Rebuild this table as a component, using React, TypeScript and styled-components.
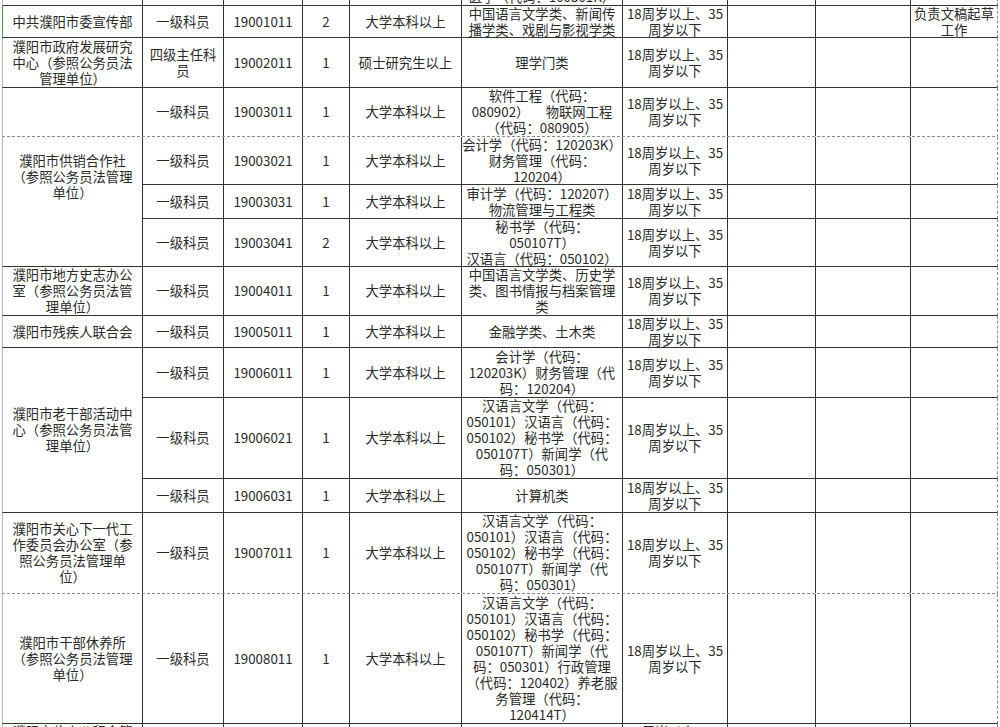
import React, { useLayoutEffect, useRef } from 'react';
import styled, { createGlobalStyle } from 'styled-components';

// column widths and row heights follow the sheet grid (borders included)
const COLUMNS = [141, 81, 79, 47, 112, 161, 105, 88, 95, 87];
const SCROLL_TOP = 11;

const AGE = '18周岁以上、35\n周岁以下';
const HAN = '汉语言文学（代码：\n050101）汉语言（代码：\n050102）秘书学（代码：\n050107T）新闻学（代\n码：050301）';

interface CellData {
  t: string;
  span?: number;
  selected?: boolean;
}

type Slot = CellData | string | null;

interface RowData {
  height: number;
  cells: Slot[];
  breakAfter?: boolean;
}

const job = (code: string, num: string, major: string, edu = '大学本科以上', pos = '一级科员'): Slot[] =>
  [pos, code, num, edu, major, AGE, '', '', ''];

const ROWS: RowData[] = [
  { height: 17, cells: ['', '', '', '', '', '医学（代码：100301K）', '', '', '', ''] },
  {
    height: 32,
    cells: [
      { t: '中共濮阳市委宣传部', selected: true },
      '一级科员', '19001011', '2', '大学本科以上',
      '中国语言文学类、新闻传\n播学类、戏剧与影视学类', AGE, '', '', '负责文稿起草\n工作'
    ]
  },
  {
    height: 50,
    cells: ['濮阳市政府发展研究\n中心（参照公务员法\n管理单位）', ...job('19002011', '1', '理学门类', '硕士研究生以上', '四级主任科\n员')]
  },
  {
    height: 49,
    breakAfter: true,
    cells: [
      { t: '濮阳市供销合作社\n（参照公务员法管理\n单位）', span: 4 },
      ...job('19003011', '1', '软件工程（代码：\n080902）\u3000 物联网工程\n（代码：080905）')
    ]
  },
  { height: 48, cells: [null, ...job('19003021', '1', '会计学（代码：120203K）\n财务管理（代码：\n120204）')] },
  { height: 34, cells: [null, ...job('19003031', '1', '审计学（代码：120207）\n物流管理与工程类')] },
  { height: 48, cells: [null, ...job('19003041', '2', '秘书学（代码：\n050107T）\n汉语言（代码：050102）')] },
  {
    height: 49,
    cells: ['濮阳市地方史志办公\n室（参照公务员法管\n理单位）', ...job('19004011', '1', '中国语言文学类、历史学\n类、图书情报与档案管理\n类')]
  },
  { height: 32, cells: ['濮阳市残疾人联合会', ...job('19005011', '1', '金融学类、土木类')] },
  {
    height: 50,
    cells: [
      { t: '濮阳市老干部活动中\n心（参照公务员法管\n理单位）', span: 3 },
      ...job('19006011', '1', '会计学（代码：\n120203K）财务管理（代\n码：120204）')
    ]
  },
  { height: 81, cells: [null, ...job('19006021', '1', HAN)] },
  { height: 34, cells: [null, ...job('19006031', '1', '计算机类')] },
  {
    height: 81,
    breakAfter: true,
    cells: ['濮阳市关心下一代工\n作委员会办公室（参\n照公务员法管理单\n位）', ...job('19007011', '1', HAN)]
  },
  {
    height: 130,
    cells: [
      '濮阳市干部休养所\n（参照公务员法管理\n单位）',
      ...job('19008011', '1', HAN + '行政管理\n（代码：120402）养老服\n务管理（代码：\n120414T）')
    ]
  },
  { height: 32, cells: ['濮阳市住房公积金管\n理中心', ...job('19009011', '1', '经济学类')] }
];

const GlobalStyle = createGlobalStyle`
  html, body {
    margin: 0;
    padding: 0;
    background: #fff;
  }

  body {
    font-family: "Noto Sans CJK SC", "Noto Sans", sans-serif;
  }
`;

const Viewport = styled.div`
  height: 100vh;
  overflow: hidden;
  background: #fff;
`;

const Sheet = styled.div<{ $cols: string; $rows: string }>`
  display: grid;
  grid-template-columns: ${(p) => p.$cols};
  grid-template-rows: ${(p) => p.$rows};
  margin-left: 2px;
  width: max-content;
  color: #2a2a2a;
  font-size: 13.33px;
  line-height: 16px;
  text-spacing-trim: space-all;
`;

const Cell = styled.div<{ $row: number; $col: number; $span: number; $selected?: boolean }>`
  grid-row: ${(p) => p.$row} / span ${(p) => p.$span};
  grid-column: ${(p) => p.$col};
  box-sizing: border-box;
  display: flex;
  align-items: center;
  justify-content: center;
  min-width: 0;
  text-align: center;
  white-space: pre;
  border-bottom: 1px solid #333;
  border-right: ${(p) => (p.$col === COLUMNS.length ? '1px dashed #8a8a8a' : '1px solid #333')};
  border-left: ${(p) => (p.$col !== 1 ? 'none' : p.$selected ? '1px solid #3f9f55' : '1px solid #b5b5b5')};
`;

const PageBreak = styled.div<{ $row: number }>`
  grid-row: ${(p) => p.$row};
  grid-column: 1 / -1;
  align-self: end;
  height: 1px;
  background: repeating-linear-gradient(90deg, #8a8a8a 0 3px, #fff 3px 5px);
  z-index: 1;
  pointer-events: none;
`;

function App (): React.ReactElement {
  const viewRef = useRef<HTMLDivElement>(null);

  useLayoutEffect(() => {
    if (viewRef.current) {
      viewRef.current.scrollTop = SCROLL_TOP;
    }
  }, []);

  const cols = COLUMNS.map((w) => `${w}px`).join(' ');
  const rows = ROWS.map((r) => `${r.height}px`).join(' ');

  return (
    <>
      <GlobalStyle />
      <Viewport ref={viewRef}>
        <Sheet $cols={cols} $rows={rows}>
          {ROWS.map((row, r) => row.cells.map((slot, c) => {
            if (slot === null) {
              return null;
            }

            const cell: CellData = typeof slot === 'string' ? { t: slot } : slot;

            return (
              <Cell
                $col={c + 1}
                $row={r + 1}
                $selected={cell.selected}
                $span={cell.span || 1}
                key={`${r}-${c}`}
              >
                {cell.t}
              </Cell>
            );
          }))}
          {ROWS.map((row, r) => row.breakAfter && <PageBreak $row={r + 1} key={`pb-${r}`} />)}
        </Sheet>
      </Viewport>
    </>
  );
}

export default App;
